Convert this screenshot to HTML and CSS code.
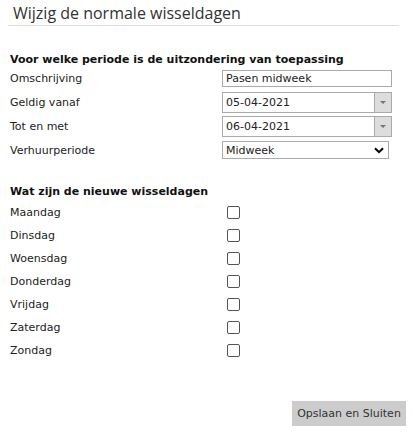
FILE: index.html
```html
<!DOCTYPE html>
<html>
<head>
<meta charset="utf-8">
<link rel="stylesheet" href="styles.css">
</head>
<body>
<div class="page">
  <h1 class="title">Wijzig de normale wisseldagen</h1>
  <h2 class="section first">Voor welke periode is de uitzondering van toepassing</h2>
  <div class="form">
    <label class="lbl">Omschrijving</label>
    <div class="ctl"><input class="text" type="text" value="Pasen midweek"></div>
    <label class="lbl">Geldig vanaf</label>
    <div class="ctl"><div class="date"><span class="dval">05-04-2021</span><span class="dbtn"><span class="tri"></span></span></div></div>
    <label class="lbl">Tot en met</label>
    <div class="ctl"><div class="date"><span class="dval">06-04-2021</span><span class="dbtn"><span class="tri"></span></span></div></div>
    <label class="lbl">Verhuurperiode</label>
    <div class="ctl"><div class="select"><span>Midweek</span><svg class="chev" width="10" height="7" viewBox="0 0 10 7"><path d="M1 1.2 L5 5.2 L9 1.2" fill="none" stroke="#000" stroke-width="2"/></svg></div></div>
  </div>
  <h2 class="section second">Wat zijn de nieuwe wisseldagen</h2>
  <div class="days">
    <span class="lbl">Maandag</span><span class="cb"></span>
    <span class="lbl">Dinsdag</span><span class="cb"></span>
    <span class="lbl">Woensdag</span><span class="cb"></span>
    <span class="lbl">Donderdag</span><span class="cb"></span>
    <span class="lbl">Vrijdag</span><span class="cb"></span>
    <span class="lbl">Zaterdag</span><span class="cb"></span>
    <span class="lbl">Zondag</span><span class="cb"></span>
  </div>
  <div class="actions"><button class="btn">Opslaan en Sluiten</button></div>
</div>
</body>
</html>
```
FILE: styles.css
```css
html, body { margin: 0; padding: 0; background: #fff; }
body { font-family: "DejaVu Sans", Verdana, sans-serif; font-size: 11px; color: #222; }
.page { width: 413px; height: 434px; position: relative; }
.title {
  margin: 0 14px 0 8px;
  padding: 3px 0 0 5px;
  height: 22px;
  border-bottom: 1px solid #ddd;
  font-family: "Open Sans", sans-serif;
  font-weight: 400;
  font-size: 16px;
  line-height: 20px;
  color: #333;
}
.section {
  margin: 0 0 0 10px;
  font-size: 11px;
  font-weight: bold;
  line-height: 13px;
  color: #111;
}
.section.first { margin-top: 27px; }
.section.second { margin-top: 23px; }
.form {
  display: grid;
  grid-template-columns: 212px 170px;
  grid-auto-rows: 24px;
  margin-left: 10px;
}
.lbl { display: flex; align-items: center; line-height: 13px; }
.ctl { display: flex; align-items: center; }
.text {
  box-sizing: border-box;
  width: 175px; height: 17px;
  border: 1px solid #aaa;
  padding: 0 3px;
  font: inherit; color: #222;
  outline: none;
}
.date {
  box-sizing: border-box;
  width: 170px; height: 21px;
  border: 1px solid #aaa;
  display: flex;
}
.dval { flex: 1; padding-left: 3px; display: flex; align-items: center; }
.dbtn {
  width: 16px;
  background: #ddd;
  border-left: 1px solid #aaa;
  display: flex; align-items: center; justify-content: center;
}
.tri { width: 0; height: 0; border-left: 3px solid transparent; border-right: 3px solid transparent; border-top: 3px solid #777; }
.select {
  box-sizing: border-box;
  width: 167px; height: 18px;
  border: 1px solid #aaa;
  display: flex; align-items: center; justify-content: space-between;
  padding: 0 4px 0 3px;
}
.days {
  display: grid;
  grid-template-columns: 217px 13px;
  grid-auto-rows: 23px;
  margin-left: 10px;
  margin-top: 3px;
}
.cb {
  align-self: center;
  box-sizing: border-box;
  width: 13px; height: 13px;
  border: 1px solid #555;
  border-radius: 2px;
}
.actions { position: absolute; left: 292px; top: 401px; }
.btn {
  width: 114px; height: 25px;
  background: #ccc;
  border: none;
  font: inherit; color: #333;
  padding: 0;
}
```
